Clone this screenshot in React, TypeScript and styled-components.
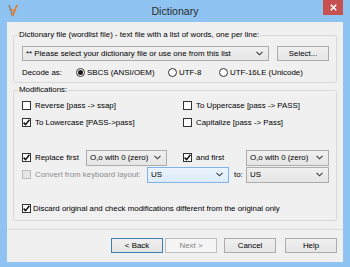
import React from "react";
import styled, { createGlobalStyle } from "styled-components";

const GlobalStyle = createGlobalStyle`
  html, body { margin: 0; padding: 0; background: #8fc4f2; }
  body { width: 350px; height: 267px; overflow: hidden; }
  * { box-sizing: border-box; }
`;

const Window = styled.div`
  width: 350px;
  height: 267px;
  background: #8fc4f2;
  display: flex;
  flex-direction: column;
  font-family: "Liberation Sans", Arial, sans-serif;
  font-size: 7.9px;
  color: #000;
`;

const TitleBar = styled.div`
  height: 22px;
  display: grid;
  grid-template-columns: 1fr auto 1fr;
  align-items: start;
`;

const AppIcon = styled.svg`
  margin: 4px 0 0 8px;
  justify-self: start;
`;

const Title = styled.div`
  font-size: 10.6px;
  line-height: 22px;
  color: #2b2b2b;
`;

const CloseButton = styled.div`
  justify-self: end;
  margin-right: 7px;
  width: 20px;
  height: 15px;
  background: #c75050;
  display: flex;
  align-items: center;
  justify-content: center;
`;

const Client = styled.div`
  flex: 1;
  margin: 0 7px 5px 7px;
  background: #f0f0f0;
  display: flex;
  flex-direction: column;
  padding-top: 8px;
`;

const Groups = styled.div`
  padding: 0 6px;
  display: flex;
  flex-direction: column;
`;

const Group = styled.fieldset<{ $mt?: number; $pb: number }>`
  margin: ${(p) => p.$mt ?? 0}px 0 0 0;
  border: 1px solid #d9d9d9;
  border-radius: 2px;
  padding: 0 7px ${(p) => p.$pb}px 8px;
  min-width: 0;
`;

const Legend = styled.legend`
  padding: 0 1px;
  margin-left: -4px;
  line-height: 10px;
  font-size: 7.9px;
`;

const FileRow = styled.div`
  display: flex;
  gap: 8px;
  margin-top: 6px;
`;

const DecodeRow = styled.div`
  display: flex;
  align-items: center;
  height: 10px;
  margin-top: 6px;
`;

const Cell = styled.div<{ $w?: number }>`
  display: flex;
  align-items: center;
  flex: ${(p) => (p.$w ? `0 0 ${p.$w}px` : "1")};
  white-space: nowrap;
`;

const Combo = styled.div<{ $w?: number; $h: number; $focus?: boolean }>`
  flex: ${(p) => (p.$w ? `0 0 ${p.$w}px` : "1")};
  height: ${(p) => p.$h}px;
  border: 1px solid ${(p) => (p.$focus ? "#7eb4ea" : "#acacac")};
  background: ${(p) =>
    p.$focus ? "linear-gradient(#ecf4fc, #dcecfc)" : "linear-gradient(#f0f0f0, #e5e5e5)"};
  display: flex;
  align-items: center;
  padding: 0 5px 0 3px;
  white-space: nowrap;
  overflow: hidden;
`;

const ComboText = styled.span`
  flex: 1;
  overflow: hidden;
`;

const Button = styled.div<{ $w: number; $default?: boolean; $disabled?: boolean }>`
  flex: 0 0 ${(p) => p.$w}px;
  height: 15px;
  border: 1px solid
    ${(p) => (p.$default ? "#3c7fb1" : p.$disabled ? "#bfbfbf" : "#acacac")};
  background: ${(p) =>
    p.$disabled ? "#f4f4f4" : "linear-gradient(#f0f0f0, #e5e5e5)"};
  color: ${(p) => (p.$disabled ? "#838383" : "#000")};
  display: flex;
  align-items: center;
  justify-content: center;
  white-space: nowrap;
`;

const Box = styled.span<{ $disabled?: boolean; $gap: number }>`
  flex: 0 0 9px;
  width: 9px;
  height: 9px;
  border: 1px solid ${(p) => (p.$disabled ? "#bcbcbc" : "#333")};
  background: ${(p) => (p.$disabled ? "#e6e6e6" : "#fff")};
  margin-right: ${(p) => p.$gap}px;
  display: flex;
  align-items: center;
  justify-content: center;
`;

const Circle = styled.span`
  flex: 0 0 9px;
  width: 9px;
  height: 9px;
  border: 1px solid #333;
  border-radius: 50%;
  background: #fff;
  margin-right: 2px;
  display: flex;
  align-items: center;
  justify-content: center;
`;

const Dot = styled.span`
  width: 5px;
  height: 5px;
  border-radius: 50%;
  background: #1a1a1a;
`;

const Label = styled.span<{ $disabled?: boolean; $pl?: number }>`
  color: ${(p) => (p.$disabled ? "#8d8d8d" : "#000")};
  padding-left: ${(p) => p.$pl ?? 0}px;
  white-space: nowrap;
`;

const TwoCol = styled.div<{ $mt: number }>`
  display: grid;
  grid-template-columns: 161px 1fr;
  height: 17px;
  margin-top: ${(p) => p.$mt}px;
  align-items: center;
`;

const Row = styled.div<{ $mt: number }>`
  display: flex;
  height: 17px;
  align-items: center;
  margin-top: ${(p) => p.$mt}px;
`;

const Footer = styled.div`
  margin-top: 8px;
  border-top: 1px solid #dcdcdc;
  padding: 8px 6px 0 0;
  display: flex;
  justify-content: flex-end;
`;

const ButtonGap = styled.span<{ $w: number }>`
  flex: 0 0 ${(p) => p.$w}px;
`;

const Chevron = () => (
  <svg width="7" height="5" viewBox="0 0 7 5">
    <polyline points="0.5,0.8 3.5,3.8 6.5,0.8" fill="none" stroke="#3a3a3a" strokeWidth="1.1" />
  </svg>
);

const Check = () => (
  <svg width="7" height="7" viewBox="0 0 7 7">
    <polyline points="0.6,3.6 2.6,5.6 6.4,0.8" fill="none" stroke="#111" strokeWidth="1.5" />
  </svg>
);

const CheckBox = ({
  checked,
  disabled,
  gap = 4,
}: {
  checked?: boolean;
  disabled?: boolean;
  gap?: number;
}) => (
  <Box $disabled={disabled} $gap={gap}>
    {checked ? <Check /> : null}
  </Box>
);

const Radio = ({ checked }: { checked?: boolean }) => (
  <Circle>{checked ? <Dot /> : null}</Circle>
);

const DropDown = ({
  text,
  w,
  h,
  focus,
}: {
  text: string;
  w?: number;
  h: number;
  focus?: boolean;
}) => (
  <Combo $w={w} $h={h} $focus={focus}>
    <ComboText>{text}</ComboText>
    <Chevron />
  </Combo>
);

export default function App() {
  return (
    <>
      <GlobalStyle />
      <Window>
        <TitleBar>
          <AppIcon width="10" height="13" viewBox="0 0 10 13">
            <path d="M1 1 L4.6 12" stroke="#8a8a8a" strokeWidth="1.8" fill="none" />
            <path d="M9 1 L4.6 12" stroke="#f07a1a" strokeWidth="1.8" fill="none" />
            <path d="M3 5 L6.5 7" stroke="#f07a1a" strokeWidth="1.3" fill="none" />
          </AppIcon>
          <Title>Dictionary</Title>
          <CloseButton>
            <svg width="7" height="7" viewBox="0 0 7 7">
              <path d="M0.8 0.8 L6.2 6.2 M6.2 0.8 L0.8 6.2" stroke="#fff" strokeWidth="1.6" />
            </svg>
          </CloseButton>
        </TitleBar>
        <Client>
          <Groups>
            <Group $pb={5}>
              <Legend>
                Dictionary file (wordlist file) - text file with a list of words, one per line:
              </Legend>
              <FileRow>
                <DropDown
                  h={15}
                  text="** Please select your dictionary file or use one from this list"
                />
                <Button $w={52}>Select...</Button>
              </FileRow>
              <DecodeRow>
                <Cell $w={54}>Decode as:</Cell>
                <Cell $w={92}>
                  <Radio checked />
                  <Label>SBCS (ANSI/OEM)</Label>
                </Cell>
                <Cell $w={51}>
                  <Radio />
                  <Label>UTF-8</Label>
                </Cell>
                <Cell>
                  <Radio />
                  <Label>UTF-16LE (Unicode)</Label>
                </Cell>
              </DecodeRow>
            </Group>
            <Group $mt={2} $pb={3}>
              <Legend>Modifications:</Legend>
              <TwoCol $mt={2}>
                <Cell>
                  <CheckBox />
                  <Label>Reverse [pass -&gt; ssap]</Label>
                </Cell>
                <Cell>
                  <CheckBox />
                  <Label>To Uppercase [pass -&gt; PASS]</Label>
                </Cell>
              </TwoCol>
              <TwoCol $mt={0}>
                <Cell>
                  <CheckBox checked />
                  <Label>To Lowercase [PASS-&gt;pass]</Label>
                </Cell>
                <Cell>
                  <CheckBox />
                  <Label>Capitalize [pass -&gt; Pass]</Label>
                </Cell>
              </TwoCol>
              <Row $mt={18}>
                <Cell $w={64}>
                  <CheckBox checked />
                  <Label>Replace first</Label>
                </Cell>
                <DropDown w={81} h={16} text="O,o with 0 (zero)" />
                <Cell $w={16} />
                <Cell $w={63}>
                  <CheckBox checked />
                  <Label>and first</Label>
                </Cell>
                <DropDown h={16} text="O,o with 0 (zero)" />
              </Row>
              <Row $mt={0}>
                <Cell $w={125}>
                  <CheckBox disabled />
                  <Label $disabled>Convert from keyboard layout:</Label>
                </Cell>
                <DropDown w={82} h={16} text="US" focus />
                <Cell $w={17}>
                  <Label $pl={5}>to:</Label>
                </Cell>
                <DropDown h={16} text="US" />
              </Row>
              <Row $mt={17}>
                <CheckBox checked gap={2} />
                <Label>Discard original and check modifications different from the original only</Label>
              </Row>
            </Group>
          </Groups>
          <Footer>
            <Button $w={52} $default>
              &lt; Back
            </Button>
            <ButtonGap $w={2} />
            <Button $w={52} $disabled>
              Next &gt;
            </Button>
            <ButtonGap $w={7} />
            <Button $w={52}>Cancel</Button>
            <ButtonGap $w={9} />
            <Button $w={52}>Help</Button>
          </Footer>
        </Client>
      </Window>
    </>
  );
}
